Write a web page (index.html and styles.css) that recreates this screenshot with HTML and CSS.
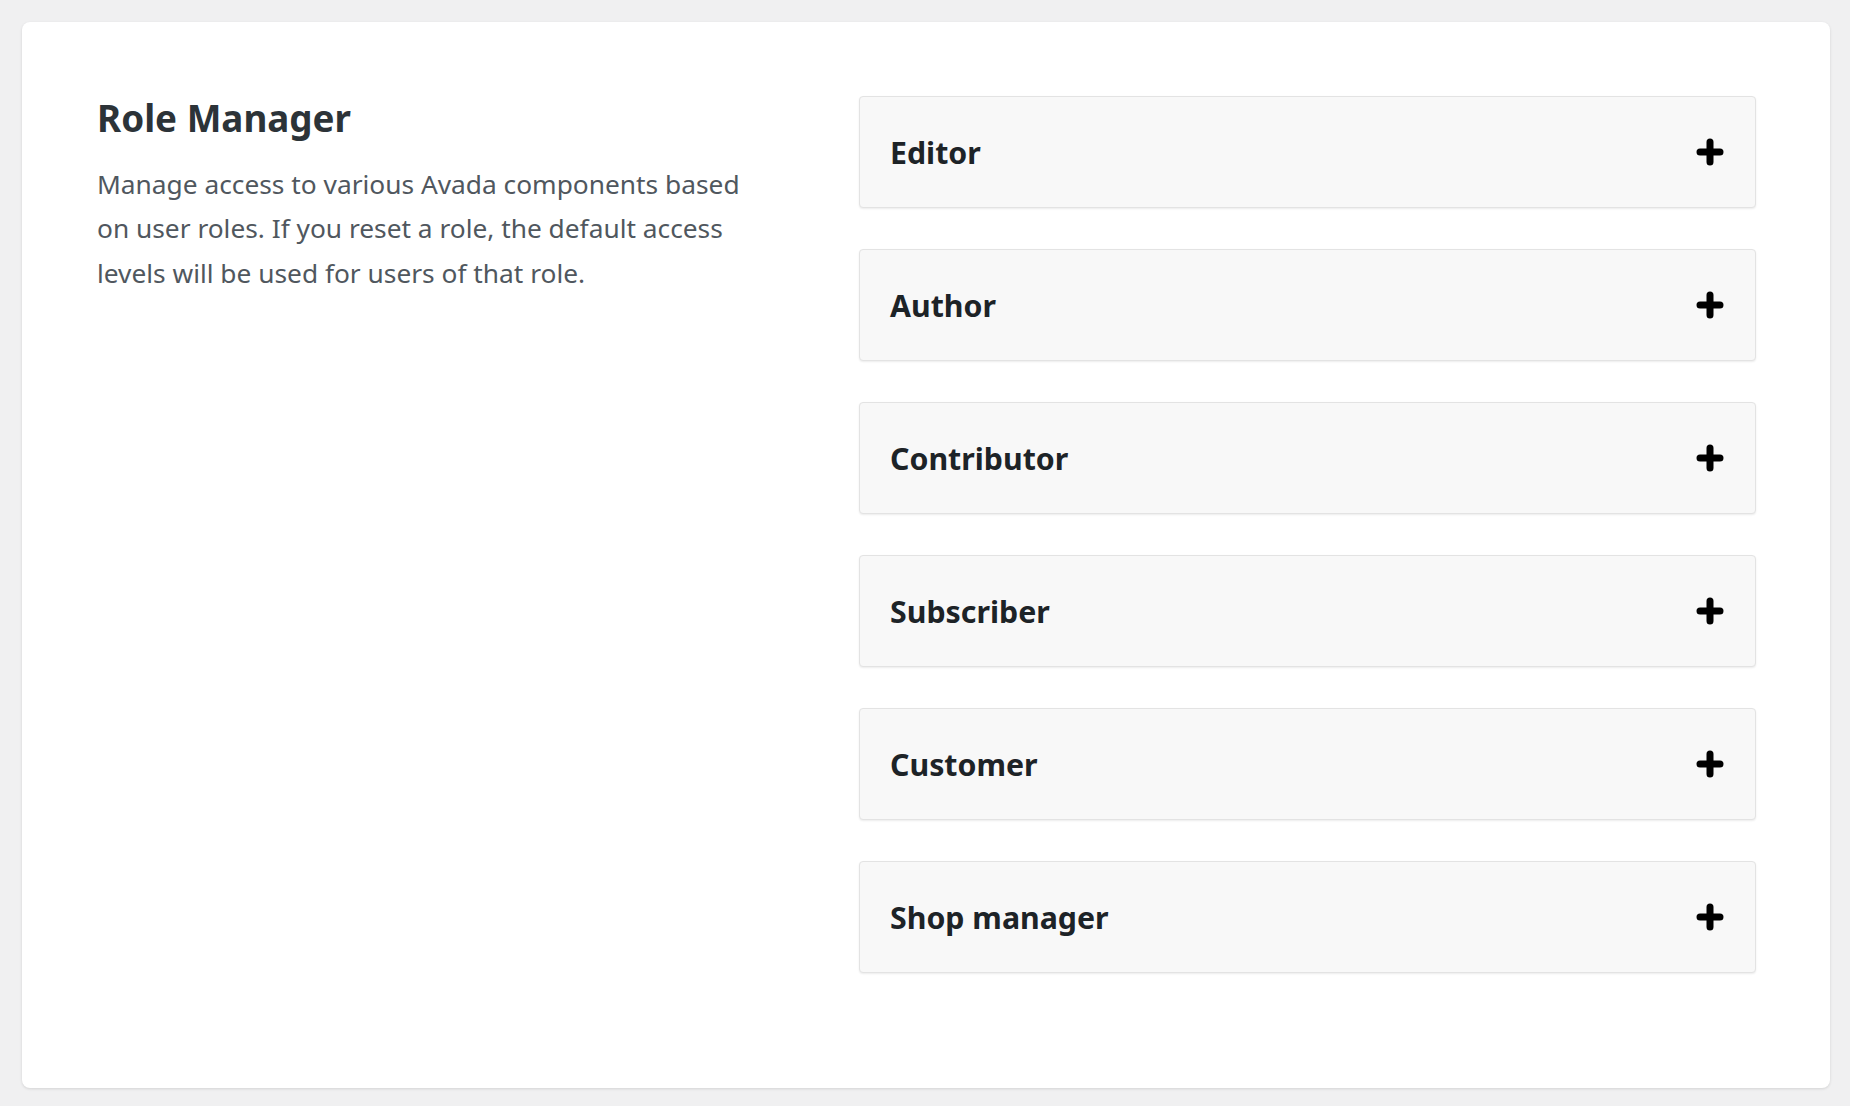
FILE: index.html
```html
<!DOCTYPE html>
<html lang="en">
<head>
<meta charset="utf-8">
<title>Role Manager</title>
<link rel="stylesheet" href="styles.css">
</head>
<body>
<div class="card">
  <div class="intro">
    <h1 class="title">Role Manager</h1>
    <p class="desc">Manage access to various Avada components based on user roles. If you reset a role, the default access levels will be used for users of that role.</p>
  </div>
  <div class="roles">
    <div class="role"><span class="role-name">Editor</span><svg class="plus" viewBox="0 0 28 28"><path d="M14 4v20M4 14h20"/></svg></div>
    <div class="role"><span class="role-name">Author</span><svg class="plus" viewBox="0 0 28 28"><path d="M14 4v20M4 14h20"/></svg></div>
    <div class="role"><span class="role-name">Contributor</span><svg class="plus" viewBox="0 0 28 28"><path d="M14 4v20M4 14h20"/></svg></div>
    <div class="role"><span class="role-name">Subscriber</span><svg class="plus" viewBox="0 0 28 28"><path d="M14 4v20M4 14h20"/></svg></div>
    <div class="role"><span class="role-name">Customer</span><svg class="plus" viewBox="0 0 28 28"><path d="M14 4v20M4 14h20"/></svg></div>
    <div class="role"><span class="role-name">Shop manager</span><svg class="plus" viewBox="0 0 28 28"><path d="M14 4v20M4 14h20"/></svg></div>
  </div>
</div>
</body>
</html>
```

FILE: styles.css
```css
html, body {
  margin: 0;
  padding: 0;
  background: #f0f0f1;
}
body {
  padding: 22px 20px 18px 22px;
  font-family: "Noto Sans", "Open Sans", sans-serif;
  box-sizing: border-box;
}
.card {
  width: 1808px;
  height: 1066px;
  box-sizing: border-box;
  background: #ffffff;
  border-radius: 8px;
  box-shadow: 0 1px 3px rgba(0, 0, 0, 0.12);
  padding: 74px 74px 0 75px;
  display: grid;
  grid-template-columns: 660px 897px;
  column-gap: 102px;
  align-items: start;
}
.title {
  margin: 0;
  font-size: 36.8px;
  line-height: 45.6px;
  font-weight: 700;
  color: #2c3338;
}
.desc {
  margin: 20px 0 0;
  font-size: 26.3px;
  line-height: 44.5px;
  color: #50575e;
}
.roles {
  display: flex;
  flex-direction: column;
  gap: 41px;
}
.role {
  height: 112px;
  box-sizing: border-box;
  background: #f8f8f8;
  border: 1px solid #e3e3e3;
  border-radius: 4px;
  box-shadow: 0 1px 2px rgba(0, 0, 0, 0.08);
  display: flex;
  align-items: center;
  justify-content: space-between;
  padding: 0 31px 0 30px;
}
.role-name {
  font-size: 30.3px;
  font-weight: 700;
  color: #1d2327;
}
.plus {
  width: 28px;
  height: 28px;
  fill: none;
  stroke: #000;
  stroke-width: 7;
  stroke-linecap: round;
}
```
